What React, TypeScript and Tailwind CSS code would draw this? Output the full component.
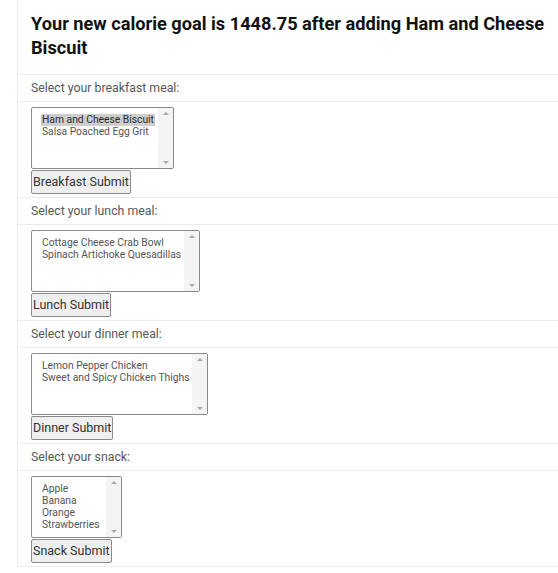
import React from "react";

function ListBox({ items, width, selected }: { items: string[]; width: number; selected?: number }) {
  return (
    <div
      className="relative h-[62px] border border-[#8a8a8a] rounded-[2px] bg-white flex"
      style={{ width }}
    >
      <div className="flex-1 pl-[9px] pt-[6px] overflow-hidden">
        {items.map((it, i) => (
          <div
            key={it}
            className={
              "text-[10.3px] leading-[12px] whitespace-nowrap w-fit pr-[1px] pl-[1px] " +
              (i === selected ? "bg-[#cecece] text-[#2a2a2a]" : "text-[#555555]")
            }
          >
            {it}
          </div>
        ))}
      </div>
      <div className="w-[15px] bg-[#f4f4f4] flex flex-col justify-between items-center py-[4px]">
        <div className="w-0 h-0 border-l-[3.5px] border-r-[3.5px] border-b-[3.5px] border-l-transparent border-r-transparent border-b-[#a8a8a8]" />
        <div className="w-0 h-0 border-l-[3.5px] border-r-[3.5px] border-t-[3.5px] border-l-transparent border-r-transparent border-t-[#a8a8a8]" />
      </div>
    </div>
  );
}

function Section({
  label,
  items,
  width,
  button,
  selected,
}: {
  label: string;
  items: string[];
  width: number;
  button: string;
  selected?: number;
}) {
  return (
    <>
      <div className="border-b border-[#ececec] px-[13px] h-[27px] flex items-center text-[12.3px] text-[#585858]">
        {label}
      </div>
      <div className="border-b border-[#ececec] px-[13px] pt-[5px] pb-[3px] h-[96px]">
        <ListBox items={items} width={width} selected={selected} />
        <button className="mt-[1px] h-[24px] px-[1px] border border-[#8a8a8a] rounded-[2px] bg-[#efefef] text-[12.5px] text-[#333333] leading-[20px]">
          {button}
        </button>
      </div>
    </>
  );
}

export default function App() {
  return (
    <div className="bg-white w-[558px] h-[573px] overflow-hidden" style={{ fontFamily: "Roboto, 'Liberation Sans', sans-serif" }}>
      <div className="ml-[17px] border-l border-[#ececec] w-[560px]">
        <div className="border-b border-[#ececec] px-[13px] pt-[12px] pb-[14px] h-[75px]">
          <h1 className="text-[18.2px] leading-[24px] font-bold text-[#111111]">
            Your new calorie goal is 1448.75 after adding Ham and Cheese Biscuit
          </h1>
        </div>
        <Section
          label="Select your breakfast meal:"
          items={["Ham and Cheese Biscuit", "Salsa Poached Egg Grit"]}
          width={143}
          button="Breakfast Submit"
          selected={0}
        />
        <Section
          label="Select your lunch meal:"
          items={["Cottage Cheese Crab Bowl", "Spinach Artichoke Quesadillas"]}
          width={169}
          button="Lunch Submit"
        />
        <Section
          label="Select your dinner meal:"
          items={["Lemon Pepper Chicken", "Sweet and Spicy Chicken Thighs"]}
          width={177}
          button="Dinner Submit"
        />
        <Section
          label="Select your snack:"
          items={["Apple", "Banana", "Orange", "Strawberries"]}
          width={91}
          button="Snack Submit"
        />
      </div>
    </div>
  );
}
